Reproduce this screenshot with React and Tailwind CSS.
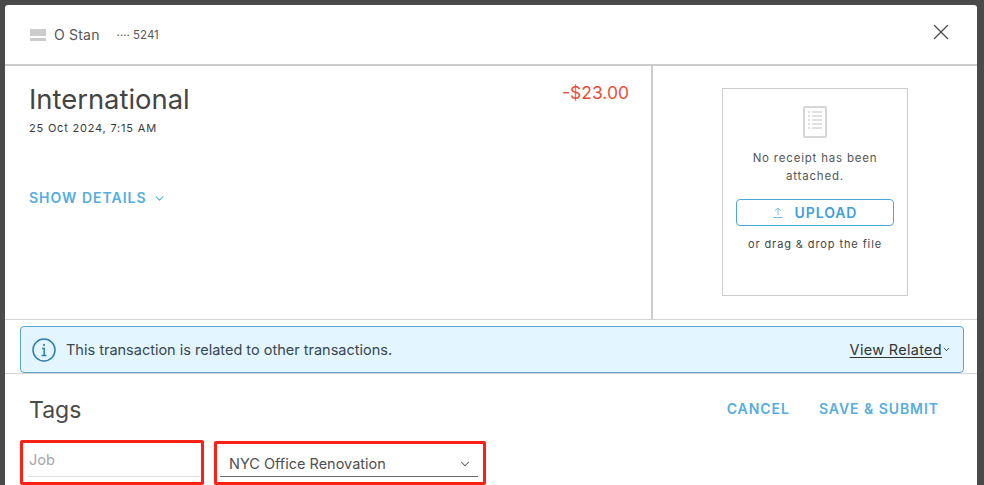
import React from 'react';
import { X, ChevronDown } from 'lucide-react';

const FONT = 'font-["Inter","Liberation_Sans",sans-serif]';

const CardIcon = () => (
  <svg width="16" height="12" viewBox="0 0 16 12" className="shrink-0">
    <rect width="16" height="12" fill="#cccccc" />
    <rect y="7" width="16" height="2" fill="#ffffff" />
  </svg>
);

const ReceiptIcon = () => (
  <svg width="24" height="32" viewBox="0 0 24 32" fill="none" stroke="#d6d6d6">
    <rect x="1" y="1" width="22" height="30" rx="1" strokeWidth="2" />
    <path d="M5 6h2M9 6h10M5 10h2M9 10h10M5 14h2M9 14h10M5 18h2M9 18h10M5 22h2M9 22h10" strokeWidth="1.3" />
  </svg>
);

const UploadIcon = () => (
  <svg width="10" height="11" viewBox="0 0 10 11" fill="none" stroke="#7fbde4" strokeWidth="1">
    <path d="M5 8V1M2 3.8 5 1l3 2.8M0 10.5h10" />
  </svg>
);

const InfoIcon = () => (
  <svg width="24" height="24" viewBox="0 0 24 24" fill="none" stroke="#2f7ea8" strokeWidth="1.5">
    <circle cx="12" cy="12" r="11" />
    <circle cx="12" cy="7" r="1.1" fill="#2f7ea8" stroke="none" />
    <path d="M10 10.5h2.2v7M9.5 17.5h5" />
  </svg>
);

const Header = () => (
  <div className="flex items-center h-[61px] pl-[25px] pr-[23px] border-b-2 border-[#cccccc]">
    <CardIcon />
    <span className="ml-[8px] text-[14px] tracking-[0.2px] text-[#565656]">O Stan</span>
    <span className="ml-[17px] mt-[3px] text-[11.5px] text-[#565656]">···· 5241</span>
    <X className="ml-auto mb-[5px] w-[26px] h-[26px] text-[#4a4a4a]" strokeWidth={1.2} />
  </div>
);

const Transaction = () => (
  <div className="w-[648px] h-[253px] border-r-2 border-[#cccccc] pl-[24px] pr-[22px] pt-[16px]">
    <div className="flex justify-between">
      <div>
        <h1 className="text-[27.4px] leading-[34px] text-[#444444]">International</h1>
        <p className="mt-[5px] text-[11px] leading-[14px] tracking-[0.8px] text-[#3a3a3a]">25 Oct 2024, 7:15 AM</p>
      </div>
      <div className="text-[17.5px] leading-[22px] text-[#e8503a]">-$23.00</div>
    </div>
    <button className="mt-[54px] flex items-center gap-[6px] text-[14px] leading-[18px] font-semibold tracking-[1px] text-[#55ade0]">
      SHOW DETAILS
      <ChevronDown className="w-[13px] h-[13px]" strokeWidth={2} />
    </button>
  </div>
);

const Receipt = () => (
  <div className="flex-1 h-[253px] pt-[22px] pl-[69px]">
    <div className="flex flex-col items-center w-[186px] h-[208px] border border-[#cccccc] pt-[17px]">
      <ReceiptIcon />
      <p className="mt-[11px] text-center text-[11.5px] leading-[18px] tracking-[0.8px] text-[#565656]">
        No receipt has been<br />attached.
      </p>
      <button className="mt-[14px] flex items-center justify-center gap-[12px] w-[158px] h-[27px] rounded-[4px] border border-[#4ba6dc] text-[14px] font-semibold tracking-[0.9px] text-[#3f9fdb]">
        <UploadIcon />
        UPLOAD
      </button>
      <p className="mt-[11px] text-[11px] leading-[14px] tracking-[0.9px] text-[#444444]">or drag &amp; drop the file</p>
    </div>
  </div>
);

const RelatedAlert = () => (
  <div className="h-[55px] border-y border-[#d4d4d4] pl-[15px] pr-[13px] pt-[6px]">
    <div className="flex items-center h-[47px] rounded-[4px] border border-[#5aa5d0] bg-[#e3f5ff] pl-[11px] pr-[12px]">
      <InfoIcon />
      <span className="ml-[10px] text-[14.5px] text-[#37474f]">This transaction is related to other transactions.</span>
      <a className="ml-auto text-[14.5px] tracking-[0.3px] text-[#333333] underline underline-offset-2">View Related</a>
      <ChevronDown className="w-[9px] h-[9px] text-[#333333]" strokeWidth={2.5} />
    </div>
  </div>
);

const TagFields = () => (
  <div className="flex items-start gap-[10px] pl-[15px]">
    <div className="w-[184px] h-[45px] border-[3px] border-[#fb2116] rounded-[2px] pl-[5px] pr-[1px] pt-[5px]">
      <div className="h-[29px] border-b border-[#e0e0e0] pl-[1px] text-[14.5px] leading-[24px] text-[#a6a6a6]">Job</div>
    </div>
    <div className="w-[272px] h-[44px] mt-[1px] border-[3px] border-[#fb2116] rounded-[2px] pl-[3px] pr-[5px] pt-[7px]">
      <div className="flex items-center justify-between h-[26px] border-b border-[#6b6b6b] pl-[9px] pr-[6px]">
        <span className="text-[14.5px] text-[#4f4f4f]">NYC Office Renovation</span>
        <ChevronDown className="w-[14px] h-[14px] text-[#555555]" strokeWidth={1.8} />
      </div>
    </div>
  </div>
);

const Tags = () => (
  <div>
    <div className="flex items-center justify-between h-[66px] pl-[24px] pr-[38px] pt-[7px]">
      <h2 className="text-[23px] text-[#4a4a4a]">Tags</h2>
      <div className="flex gap-[29px] mb-[4px] text-[14px] font-semibold tracking-[0.95px] text-[#55ade0]">
        <button>CANCEL</button>
        <button>SAVE &amp; SUBMIT</button>
      </div>
    </div>
    <TagFields />
  </div>
);

export default function App() {
  return (
    <div className={`h-[485px] w-[984px] overflow-hidden bg-[#4a4a4a] pt-[5px] pl-[5px] ${FONT}`}>
      <div className="w-[972px] h-[600px] rounded-t-[3px] bg-white">
        <Header />
        <div className="flex">
          <Transaction />
          <Receipt />
        </div>
        <RelatedAlert />
        <Tags />
      </div>
    </div>
  );
}
